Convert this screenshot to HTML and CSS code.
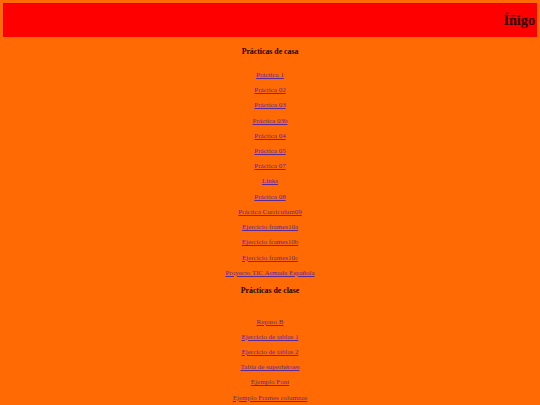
FILE: index.html
```html
<!DOCTYPE html>
<html lang="es">
<head>
<meta charset="utf-8">
<title>Íñigo</title>
<link rel="stylesheet" href="styles.css">
</head>
<body>
<header class="banner"><h1 class="name">Íñigo</h1></header>
<main class="content">
  <h3 class="section-title first">Prácticas de casa</h3>
  <ul class="links">
    <li><a href="#">Práctica 1</a></li>
    <li><a href="#">Práctica 02</a></li>
    <li><a href="#">Práctica 03</a></li>
    <li><a href="#">Práctica 03b</a></li>
    <li><a href="#">Práctica 04</a></li>
    <li><a href="#">Práctica 05</a></li>
    <li><a href="#">Práctica 07</a></li>
    <li><a href="#">Links</a></li>
    <li><a href="#">Práctica 08</a></li>
    <li><a href="#">Práctica Curriculum09</a></li>
    <li><a href="#">Ejercicio frames10a</a></li>
    <li><a href="#">Ejercicio frames10b</a></li>
    <li><a href="#">Ejercicio frames10c</a></li>
    <li><a href="#">Proyecto TIC Armada Española</a></li>
  </ul>
  <h3 class="section-title second">Prácticas de clase</h3>
  <ul class="links">
    <li><a href="#">Repaso B</a></li>
    <li><a href="#">Ejercicio de tablas 1</a></li>
    <li><a href="#">Ejercicio de tablas 2</a></li>
    <li><a href="#">Tabla de superhéroes</a></li>
    <li><a href="#">Ejemplo Font</a></li>
    <li><a href="#">Ejemplo Frames columnas</a></li>
  </ul>
</main>
</body>
</html>
```
FILE: styles.css
```css
html, body {
  margin: 0;
  padding: 0;
}
body {
  background: #ff6a04;
  font-family: "Liberation Serif", "Times New Roman", serif;
  width: 540px;
  height: 405px;
  overflow: hidden;
}
.banner {
  margin: 3px;
  height: 34px;
  box-sizing: border-box;
  background: #ff0000;
  border-top: 1px solid #e20000;
  border-left: 1px solid #e20000;
  display: flex;
  align-items: center;
  justify-content: flex-end;
  padding-right: 2px;
}
.name {
  margin: 0;
  font-size: 14.2px;
  font-weight: bold;
  color: #2a0000;
  line-height: 1;
  padding-top: 0;
}
.content {
  display: flex;
  flex-direction: column;
  align-items: center;
}
.section-title {
  margin: 0;
  font-size: 7.8px;
  font-weight: bold;
  color: #1a0500;
  height: 12px;
  line-height: 12px;
}
.section-title.first {
  margin-top: 5.5px;
  margin-bottom: 10.4px;
}
.section-title.second {
  margin-top: 3.6px;
  margin-bottom: 18px;
}
.links {
  list-style: none;
  margin: 0;
  padding: 0;
  display: flex;
  flex-direction: column;
  align-items: center;
}
.links li {
  height: 15.23px;
  line-height: 15.23px;
  font-size: 7px;
}
.links a {
  color: #5a2a9a;
  text-decoration: underline;
}
```
